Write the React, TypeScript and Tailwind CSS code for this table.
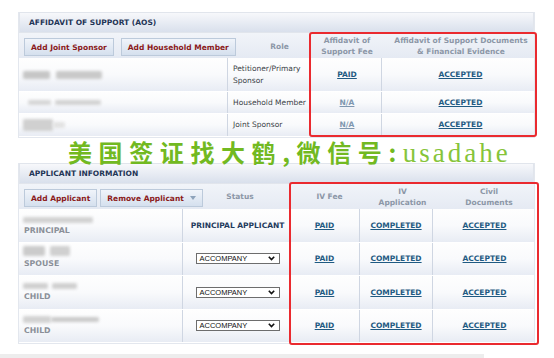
import React from 'react';

type Blur = { w: number; h: number; ml?: number; c?: string };

function BlurName({ parts, mt = 0 }: { parts: Blur[]; mt?: number }) {
    return (
        <div className="flex items-center" style={{ marginTop: mt }}>
            {parts.map((p, i) => (
                <div
                    key={i}
                    className="rounded-[2px] blur-[1.6px]"
                    style={{ width: p.w, height: p.h, marginLeft: p.ml ?? 0, background: p.c ?? '#cdcdcd' }}
                />
            ))}
        </div>
    );
}

function Btn({ children, caret }: { children: React.ReactNode; caret?: boolean }) {
    return (
        <div className="flex h-[18px] shrink-0 items-center gap-[6px] whitespace-nowrap border border-[#bccadb] bg-linear-to-b from-[#f0f4fa] to-[#d5e0ee] px-[6px] font-bold text-[#8b1a1a]">
            {children}
            {caret && (
                <svg width="6" height="4" viewBox="0 0 6 4">
                    <path d="M0 0h6L3 4z" fill="#8ea3bb" />
                </svg>
            )}
        </div>
    );
}

function PanelHeader({ title }: { title: string }) {
    return (
        <div className="flex h-[21px] items-center border border-[#e1e5ec] bg-linear-to-b from-[#f7f8fb] to-[#d9e0ec] px-[9px] font-bold text-[#1f3556]">
            {title}
        </div>
    );
}

function Link({ children, muted }: { children: React.ReactNode; muted?: boolean }) {
    return (
        <span className={muted ? 'font-bold text-[#7f97b0] underline' : 'font-bold text-[#1f5a82] underline'}>
            {children}
        </span>
    );
}

const rowBg = 'bg-linear-to-b from-[#fefefe] via-[#f9fafc] to-[#e8ecf4] border-b border-white';

function AosPanel() {
    const rows = [
        {
            name: <BlurName parts={[{ w: 27, h: 8, c: '#c6c6c6' }, { w: 46, h: 8, ml: 6, c: '#c9c9c9' }]} />,
            role: (
                <>
                    Petitioner/Primary
                    <br />
                    Sponsor
                </>
            ),
            fee: <Link>PAID</Link>,
            h: 'h-[34px]',
        },
        {
            name: <BlurName parts={[{ w: 23, h: 5, ml: 5, c: '#d6d6d6' }, { w: 46, h: 5, ml: 4, c: '#d2d2d2' }]} />,
            role: 'Household Member',
            fee: <Link muted>N/A</Link>,
            h: 'h-[22px]',
        },
        {
            name: <BlurName parts={[{ w: 30, h: 12, ml: 0, c: '#d0d0d0' }, { w: 12, h: 6, ml: 0, c: '#e2e2e2' }]} />,
            role: 'Joint Sponsor',
            fee: <Link muted>N/A</Link>,
            h: 'h-[23px]',
        },
    ];

    return (
        <div className="relative w-[517px] border-x border-b border-[#e3e7ee]">
            <PanelHeader title="AFFIDAVIT OF SUPPORT (AOS)" />
            <div className="grid h-[25px] grid-cols-[208px_83px_71px_155px] bg-linear-to-b from-[#f1f4f9] to-[#e5eaf3] font-bold leading-[11px] text-[#8c97a7]">
                <div className="flex gap-[7px] pl-[5px] pt-[5px]">
                    <Btn>Add Joint Sponsor</Btn>
                    <Btn>Add Household Member</Btn>
                </div>
                <div className="flex items-center justify-center pl-[22px] pt-[2px]">Role</div>
                <div className="flex items-center justify-center pl-[3px] text-center">
                    Affidavit of
                    <br />
                    Support Fee
                </div>
                <div className="flex items-center justify-center pl-[5px] text-center">
                    Affidavit of Support Documents
                    <br />& Financial Evidence
                </div>
            </div>
            {rows.map((r, i) => (
                <div key={i} className={`grid grid-cols-[208px_83px_71px_155px] ${r.h} ${rowBg}`}>
                    <div className="flex items-center pl-[4px]">{r.name}</div>
                    <div className="flex items-center border-l border-[#cfd6e2] pl-[5px] leading-[12px] text-[#3a3f47]">
                        {r.role}
                    </div>
                    <div className="flex items-center justify-center pl-[3px]">{r.fee}</div>
                    <div className="flex items-center justify-center border-l border-[#cfd6e2] pl-[3px]">
                        <Link>ACCEPTED</Link>
                    </div>
                </div>
            ))}
            <div className="pointer-events-none absolute left-[290px] top-[20px] h-[105px] w-[228px] rounded-[3px] border-2 border-[#ea2a2f]" />
        </div>
    );
}

function Accompany() {
    return (
        <div className="flex h-[11px] w-[84px] items-center justify-between border border-[#6d6d6d] bg-white pl-[3px] pr-[4px] font-['Liberation_Sans',sans-serif] text-[7.5px] text-[#111]">
            ACCOMPANY
            <svg width="7" height="5" viewBox="0 0 7 5">
                <path d="M0.8 0.8L3.5 3.6L6.2 0.8" fill="none" stroke="#111" strokeWidth="1.6" />
            </svg>
        </div>
    );
}

function ApplicantPanel() {
    const rows = [
        {
            name: <BlurName mt={1} parts={[{ w: 70, h: 6, c: '#d2d2d2' }]} />,
            label: 'PRINCIPAL',
            status: <span className="font-bold text-[#1f3a5c]">PRINCIPAL APPLICANT</span>,
        },
        {
            name: <BlurName mt={-4} parts={[{ w: 22, h: 10, c: '#cbcbcb' }, { w: 20, h: 10, ml: 5, c: '#d0d0d0' }]} />,
            label: 'SPOUSE',
            status: <Accompany />,
        },
        {
            name: <BlurName parts={[{ w: 25, h: 6, c: '#d0d0d0' }, { w: 25, h: 6, ml: 4, c: '#d0d0d0' }]} />,
            label: 'CHILD',
            status: <Accompany />,
        },
        {
            name: <BlurName parts={[{ w: 28, h: 7, c: '#d2d2d2' }, { w: 48, h: 5, ml: 0, c: '#cacaca' }]} />,
            label: 'CHILD',
            status: <Accompany />,
        },
    ];

    return (
        <div className="relative w-[517px] border-x border-b border-[#e3e7ee]">
            <PanelHeader title="APPLICANT INFORMATION" />
            <div className="grid h-[25px] grid-cols-[163px_108px_69px_73px_104px] bg-linear-to-b from-[#f1f4f9] to-[#e5eaf3] font-bold leading-[11px] text-[#8c97a7]">
                <div className="flex gap-[3px] pl-[5px] pt-[5px]">
                    <Btn>Add Applicant</Btn>
                    <Btn caret>Remove Applicant</Btn>
                </div>
                <div className="flex items-center justify-center pl-[8px]">Status</div>
                <div className="flex items-center justify-center pl-[10px]">IV Fee</div>
                <div className="flex items-center justify-center pl-[14px] text-center">
                    IV
                    <br />
                    Application
                </div>
                <div className="flex items-center justify-center pl-[10px] text-center">
                    Civil
                    <br />
                    Documents
                </div>
            </div>
            {rows.map((r, i) => (
                <div key={i} className={`grid h-[33.5px] grid-cols-[163px_108px_69px_73px_104px] ${rowBg}`}>
                    <div className="flex flex-col justify-center pl-[4px]">
                        {r.name}
                        <div className="mt-[3px] pl-[1px] text-[7.8px] font-bold leading-[9px] text-[#8a8f98]">{r.label}</div>
                    </div>
                    <div className="flex items-center justify-center border-l border-[#cfd6e2] pl-[2px]">{r.status}</div>
                    <div className="flex items-center justify-center">
                        <Link>PAID</Link>
                    </div>
                    <div className="flex items-center justify-center border-l border-[#cfd6e2]">
                        <Link>COMPLETED</Link>
                    </div>
                    <div className="flex items-center justify-center border-l border-[#cfd6e2]">
                        <Link>ACCEPTED</Link>
                    </div>
                </div>
            ))}
            <div className="pointer-events-none absolute left-[270px] top-[19px] h-[163px] w-[250px] rounded-[3px] border-2 border-[#ea2a2f]" />
        </div>
    );
}

function Watermark() {
    return (
        <div className="pointer-events-none absolute left-[68px] top-[139px] flex items-baseline whitespace-nowrap">
            <span className="font-['Noto_Sans_CJK_SC',sans-serif] text-[24px] font-bold leading-[26px] tracking-[6.6px] text-[#72b921]">
                美国签证找大鹤,微信号:
            </span>
            <span className="font-['Liberation_Serif',serif] text-[27px] leading-[26px] tracking-[3px] text-[#86c43a]">
                usadahe
            </span>
        </div>
    );
}

export default function App() {
    return (
        <div className="relative h-[358px] w-[554px] overflow-hidden bg-white font-['DejaVu_Sans',sans-serif] text-[7.5px]">
            <div className="flex flex-col gap-[25px] pl-[18px] pt-[12px]">
                <AosPanel />
                <ApplicantPanel />
            </div>
            <div className="mt-[10px] h-[6px] w-[484px] bg-[#ededed]" />
            <Watermark />
        </div>
    );
}
